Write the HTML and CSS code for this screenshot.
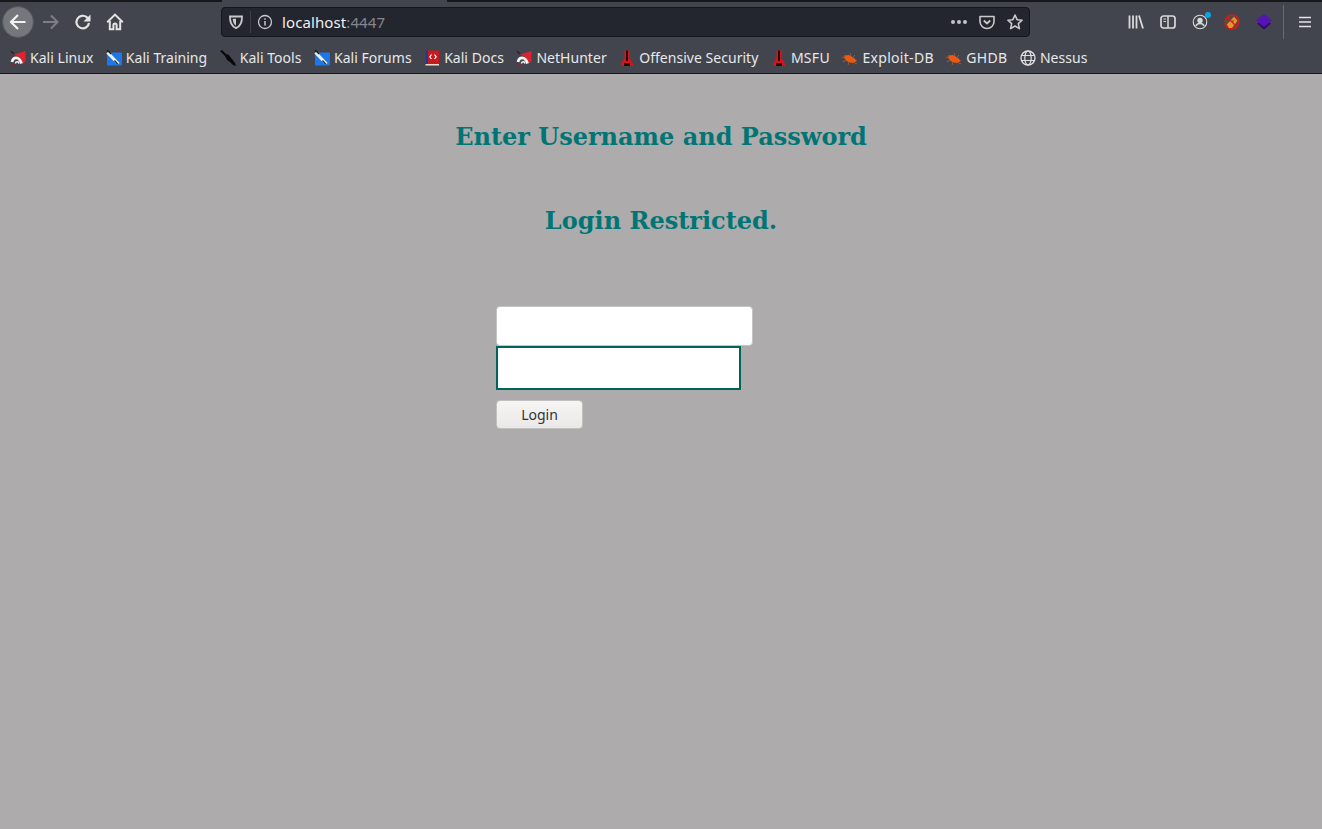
FILE: index.html
```html
<!DOCTYPE html>
<html lang="en">
<head>
<meta charset="utf-8">
<title>Login</title>
<link rel="stylesheet" href="styles.css">
</head>
<body>
<header class="chrome">
  <div class="tabstrip"><div class="tab-gap"></div></div>
  <div class="navbar">
    <div class="nav-left">
      <button class="back" aria-label="Back"><svg width="20" height="20" viewBox="0 0 20 20"><path d="M17.500 10H4M10 3 3 10l7 7" fill="none" stroke="#f2f2f2" stroke-width="2.200"/></svg></button>
      <span class="nav-icon"><svg width="20" height="20" viewBox="0 0 20 20"><path d="M2 10h14M10 3.500 16.500 10 10 16.500" fill="none" stroke="#7d7f84" stroke-width="2"/></svg></span>
      <span class="nav-icon"><svg width="18" height="18" viewBox="0 0 18 18"><path d="M15 10A6.300 6.300 0 1 1 12.800 4.200L15 6.500" fill="none" stroke="#e4e4e6" stroke-width="2.200"/><path d="M16.500 1.500V8.500H9.500z" fill="#e4e4e6"/></svg></span>
      <span class="nav-icon"><svg width="18" height="18" viewBox="0 0 18 18"><path d="M1.200 9.200 9 1.600 16.800 9.200" fill="none" stroke="#e4e4e6" stroke-width="2"/><path d="M3.800 8v8.200h3.600V12a1.600 1.600 0 0 1 3.200 0v4.200h3.600V8" fill="none" stroke="#e4e4e6" stroke-width="2"/></svg></span>
    </div>
    <div class="urlbar">
      <span class="url-icon shield"><svg width="16" height="16" viewBox="0 0 16 16"><path d="M2 2.500h12c.2 6-1.500 9.800-6 11.700C3.500 12.300 1.800 8.500 2 2.500z" fill="none" stroke="#c9c9cc" stroke-width="1.800"/><path d="M4.800 4.800H8v7C5.800 10.500 4.900 8.300 4.800 4.800z" fill="#c9c9cc"/></svg></span>
      <span class="url-divider"></span>
      <span class="url-icon info"><svg width="16" height="16" viewBox="0 0 16 16"><circle cx="8" cy="8" r="6.500" fill="none" stroke="#c9c9cc" stroke-width="1.300"/><path d="M8 7v4.500M8 4.300v1.500" stroke="#c9c9cc" stroke-width="1.500"/></svg></span>
      <span class="url-text">localhost<span class="url-port">:4447</span></span>
      <span class="url-actions">
        <svg width="18" height="6" viewBox="0 0 18 6"><g fill="#c4c4c7"><circle cx="3" cy="3" r="2"/><circle cx="9" cy="3" r="2"/><circle cx="15" cy="3" r="2"/></g></svg>
        <svg width="16" height="16" viewBox="0 0 16 16"><path d="M1 2.500h14v5a7 7 0 0 1-14 0z" fill="none" stroke="#c9c9cc" stroke-width="1.600" stroke-linejoin="round"/><path d="M4.800 6.500 8 9.500l3.200-3" fill="none" stroke="#c9c9cc" stroke-width="1.800"/></svg>
        <svg width="18" height="18" viewBox="0 0 18 18"><path d="m9 2 2.100 4.700 5 .5-3.800 3.400 1.100 5L9 13l-4.400 2.600 1.100-5-3.800-3.400 5-.5z" fill="none" stroke="#c9c9cc" stroke-width="1.600" stroke-linejoin="round"/></svg>
      </span>
    </div>
    <div class="nav-right">
      <span class="tool"><svg width="16" height="16" viewBox="0 0 16 16"><path d="M1.500 1.500v13M5 1.500v13M8.500 1.500v13M11 1.500l4 13" fill="none" stroke="#d9d9dc" stroke-width="1.800"/></svg></span>
      <span class="tool"><svg width="16" height="16" viewBox="0 0 16 16"><rect x="1" y="2" width="14" height="12" rx="2.500" fill="none" stroke="#d9d9dc" stroke-width="1.700"/><path d="M8 2v12" stroke="#d9d9dc" stroke-width="1.500"/><path d="M3.500 5h2.500M3.500 7.500h2.500" stroke="#d9d9dc"/></svg></span>
      <span class="tool account"><svg width="16" height="16" viewBox="0 0 16 16"><circle cx="8" cy="8" r="6.800" fill="none" stroke="#d9d9dc" stroke-width="1.100"/><circle cx="8" cy="6.500" r="2.700" fill="#d9d9dc"/><path d="M3.800 12c.8-2 2.400-2.600 4.200-2.600s3.400.6 4.200 2.600" fill="none" stroke="#d9d9dc" stroke-width="1.500"/></svg><span class="badge"></span></span>
      <span class="tool"><svg width="16" height="16" viewBox="0 0 16 16"><circle cx="8" cy="8" r="7" fill="#5a4a3a" stroke="#d31c1c" stroke-width="1.500"/><path d="M2.800 10.500 10 2.800l3.500 4L8 14H5z" fill="#e8932c"/><circle cx="9" cy="7" r="1" fill="#a85d14"/><path d="M3 3l10 10" stroke="#d31c1c" stroke-width="1.300"/></svg></span>
      <span class="tool"><svg width="16" height="16" viewBox="0 0 16 16"><path d="M1 9.500 8 15.500l7-6-7-3z" fill="#2d0a6b"/><path d="M8 0 16 6.500 8 13 0 6.500z" fill="#5514b4"/></svg></span>
      <span class="tool-divider"></span>
      <span class="tool menu"><svg width="14" height="14" viewBox="0 0 14 14"><path d="M1 2.500h12M1 7h12M1 11.500h12" stroke="#e4e4e6" stroke-width="1.700"/></svg></span>
    </div>
  </div>
  <nav class="bookmarks">
    <a class="bm"><svg class="fav" viewBox="0 0 16 16"><use href="#i-kali"/></svg>Kali Linux</a>
    <a class="bm"><svg class="fav" viewBox="0 0 16 16"><use href="#i-train"/></svg>Kali Training</a>
    <a class="bm"><svg class="fav" viewBox="0 0 16 16"><use href="#i-tools"/></svg>Kali Tools</a>
    <a class="bm"><svg class="fav" viewBox="0 0 16 16"><use href="#i-train"/></svg>Kali Forums</a>
    <a class="bm"><svg class="fav" viewBox="0 0 16 16"><use href="#i-docs"/></svg>Kali Docs</a>
    <a class="bm"><svg class="fav" viewBox="0 0 16 16"><use href="#i-kali"/></svg>NetHunter</a>
    <a class="bm"><svg class="fav" viewBox="0 0 16 16"><use href="#i-off"/></svg>Offensive Security</a>
    <a class="bm wide"><svg class="fav" viewBox="0 0 16 16"><use href="#i-off"/></svg>MSFU</a>
    <a class="bm wide"><svg class="fav" viewBox="0 0 16 16"><use href="#i-bug"/></svg>Exploit-DB</a>
    <a class="bm wide"><svg class="fav" viewBox="0 0 16 16"><use href="#i-bug"/></svg>GHDB</a>
    <a class="bm"><svg class="fav" viewBox="0 0 16 16"><circle cx="8" cy="8" r="7" fill="none" stroke="#e0e0e2" stroke-width="1.300"/><ellipse cx="8" cy="8" rx="3.200" ry="7" fill="none" stroke="#e0e0e2" stroke-width="1.200"/><path d="M1.500 5.500h13M1.500 10.500h13" stroke="#e0e0e2" stroke-width="1.200"/></svg>Nessus</a>
  </nav>
</header>
<svg class="defs" width="0" height="0" aria-hidden="true">
  <defs>
    <g id="i-kali"><path d="M4 4.500 15.500 1V11l-3 3.500C12 9 9 6 4 4.500z" fill="#e0222f"/><path d="M2 12C3 7 9 5.500 11.500 13.500" fill="none" stroke="#f4f4f4" stroke-width="2.800"/><path d="M5.500 13.500c0-2 3-2.500 3.500 0" fill="none" stroke="#f4f4f4" stroke-width="1.500"/><path d="M1 13.500 3.500 16 7 15.500z" fill="#a5162a"/><path d="M1 1l3 3" stroke="#22232a" stroke-width="1.300"/></g>
    <g id="i-train"><rect x="1" y="2.500" width="15" height="13" rx="1" fill="#1c78e8"/><path d="M1.500 2.500 12.500 14" stroke="#f4f4f4" stroke-width="3"/><path d="M1 0 5 4" stroke="#15161a" stroke-width="1.200"/><path d="M8.500 10.500l3.500 4" stroke="#25262b" stroke-width="1.300"/></g>
    <g id="i-tools"><path d="M0 1 2 0l4 4 3 1 2 3 1 1 3 4 1 3-3-1-3-3-3-2-2-4z" fill="#08080a"/></g>
    <g id="i-docs"><rect x="1.500" y=".5" width="13.500" height="13.500" fill="#c81a1f"/><rect x="1.500" y=".5" width="2.500" height="13.500" fill="#1e3a8c"/><path d="M1.500 14h13.500v1.500H1.500z" fill="#e8dccc"/><path d="M7.500 4.500 5.800 6.800 7.500 9M10.500 4.500l1.700 2.300L10.500 9" fill="none" stroke="#fff" stroke-width="1.200"/></g>
    <g id="i-off"><path d="M5.500 .5h5V8l3.500 5.500V16H2v-2.500L5.500 8z" fill="#d5141c"/><path d="M7 .5h2V11H7zM5 13h6v3H5z" fill="#2a0508"/></g>
    <g id="i-bug"><path d="M2 5.500 7 5l5 3 3 3-4 2-5-1-3-3z" fill="#ea5a12"/><path d="M0 7l3 1M1 12l3-2M8 3l1 3M13 5l-2 2M15 14l-4-2M6 15l1-3" stroke="#b5581a" stroke-width=".9"/></g>
  </defs>
</svg>
<main class="page">
  <h2 class="title first">Enter Username and Password</h2>
  <h2 class="title second">Login Restricted.</h2>
  <form class="login">
    <input class="field" type="text" aria-label="Username">
    <input class="field-focus" type="password" aria-label="Password">
    <button class="submit" type="button">Login</button>
  </form>
</main>
</body>
</html>
```
FILE: styles.css
```css
* { box-sizing: border-box; }
html, body { height: 100%; }
body {
  margin: 0;
  background: #adabab;
  display: flex;
  flex-direction: column;
  overflow: hidden;
}
.chrome {
  height: 74px;
  flex: none;
  background: #42454d;
  border-bottom: 1px solid #17181c;
  font-family: "Noto Sans", sans-serif;
  color: #e8e8ea;
}
.tabstrip {
  height: 2px;
  background: #17181c;
  padding-left: 222px;
}
.tab-gap { width: 225px; height: 100%; background: #42454d; }
.navbar {
  height: 40px;
  display: flex;
  align-items: center;
}
.nav-left {
  width: 221px;
  flex: none;
  display: flex;
  align-items: center;
  padding-left: 2px;
}
.back {
  width: 32px;
  height: 32px;
  padding: 0;
  border: 1px solid #55575d;
  border-radius: 50%;
  background: #75777c;
  display: flex;
  align-items: center;
  justify-content: center;
  margin-right: 1px;
}
.nav-icon {
  width: 32px;
  height: 32px;
  display: flex;
  align-items: center;
  justify-content: center;
}
.urlbar {
  width: 809px;
  height: 30px;
  flex: none;
  display: flex;
  align-items: center;
  background: #24262f;
  border: 1px solid #15161a;
  border-radius: 4px;
  font-size: 15px;
}
.url-icon { display: flex; }
.shield { margin-left: 6px; }
.url-divider {
  width: 1px;
  height: 22px;
  background: #3e4048;
  margin: 0 6px 0 6px;
}
.url-text { margin-left: 9px; color: #f0f0f2; letter-spacing: .1px; }
.url-port { color: #85868b; }
.url-actions {
  margin-left: auto;
  padding-right: 5px;
  display: flex;
  align-items: center;
  gap: 11px;
}
.nav-right {
  flex: 1;
  display: flex;
  align-items: center;
  padding-left: 90px;
}
.tool {
  width: 32px;
  height: 32px;
  flex: none;
  display: flex;
  align-items: center;
  justify-content: center;
  position: relative;
}
.badge {
  position: absolute;
  top: 6px;
  right: 5px;
  width: 6px;
  height: 6px;
  border-radius: 50%;
  background: #0aa5e8;
}
.tool-divider {
  width: 1px;
  height: 34px;
  background: #686a70;
  margin: 0 5px 0 3px;
}
.bookmarks {
  height: 31px;
  display: flex;
  align-items: center;
  padding: 0 0 0 10px;
  gap: 12.5px;
  font-size: 14px;
  white-space: nowrap;
  letter-spacing: .03px;
}
.bm { display: flex; align-items: center; gap: 4px; }
.wide { letter-spacing: .3px; }
.fav { width: 16px; height: 16px; flex: none; }
.defs { position: absolute; }
.page {
  flex: 1;
  display: flex;
  flex-direction: column;
  align-items: center;
}
.title {
  margin: 0;
  font: bold 24px/32px "DejaVu Serif", serif;
  color: #007575;
}
.first { margin-top: 47px; }
.second { margin-top: 52px; }
.login {
  width: 330px;
  margin-top: 69px;
  display: flex;
  flex-direction: column;
  align-items: flex-start;
}
.field {
  width: 257px;
  height: 40px;
  background: #fff;
  border: 1px solid #c6c4c3;
  border-radius: 4px;
  outline: none;
}
.field-focus {
  width: 245px;
  height: 44px;
  background: #fff;
  border: 2px solid #00645c;
  border-radius: 0;
  outline: none;
}
.submit {
  width: 87px;
  height: 29px;
  margin-top: 10px;
  padding: 0;
  border: 1px solid #c3c1c0;
  border-radius: 4px;
  background: linear-gradient(#f6f5f4, #ebe9e7);
  font: 14px "Noto Sans", sans-serif;
  color: #2e3436;
}
```
